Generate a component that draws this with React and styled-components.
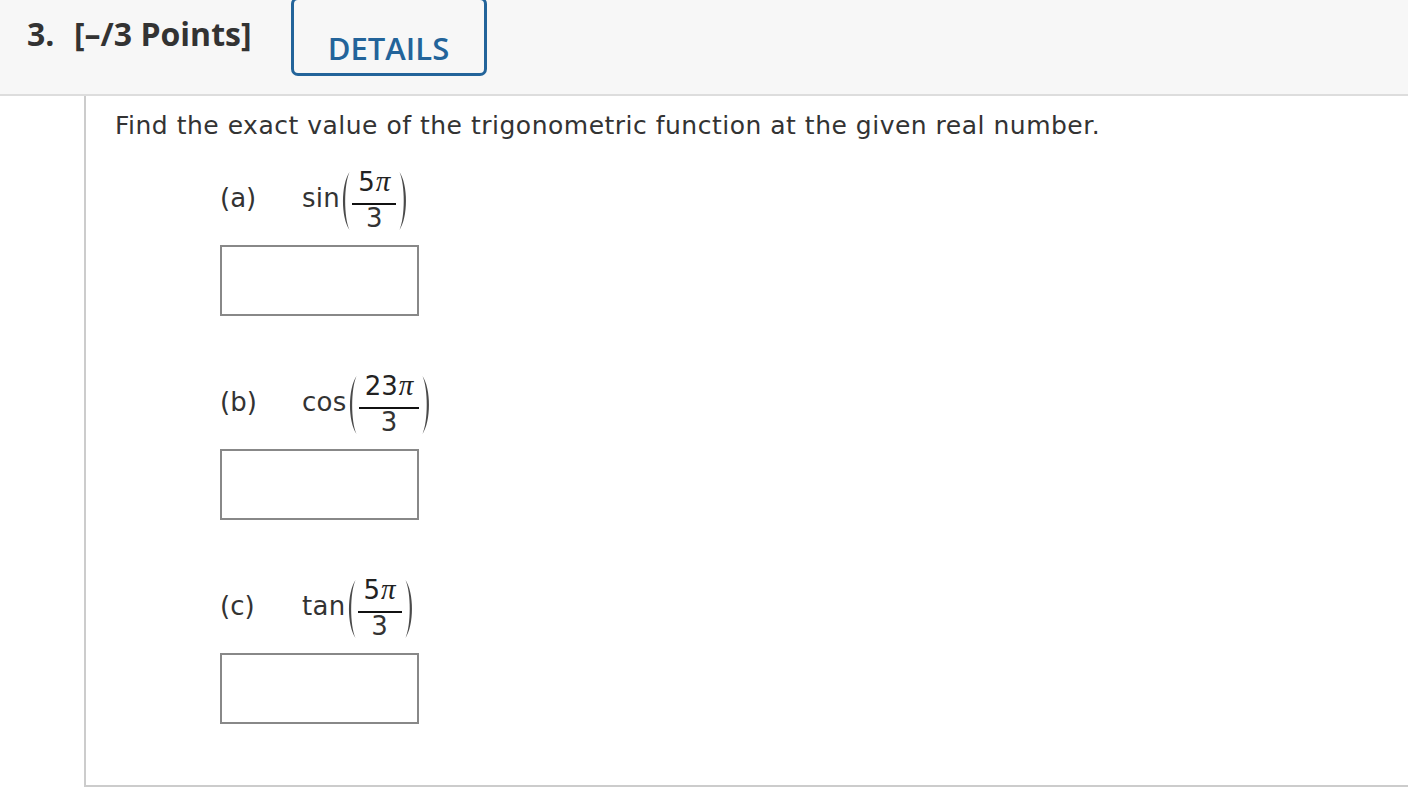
import React from "react";
import styled, { createGlobalStyle } from "styled-components";

const GlobalStyle = createGlobalStyle`
  html, body {
    margin: 0;
    padding: 0;
    background: #fff;
  }
  body {
    font-family: "DejaVu Sans", Verdana, sans-serif;
    color: #333;
  }
`;

const parts = [
  { label: "(a)", fn: "sin", num: "5", den: "3" },
  { label: "(b)", fn: "cos", num: "23", den: "3" },
  { label: "(c)", fn: "tan", num: "5", den: "3" },
];

const Paren = ({ flip }) => (
  <ParenSvg viewBox="0 0 13 60" width="13" height="60" $flip={flip}>
    <path d="M11.5 1 C2.8 14 2.8 46 11.5 59 C5.8 46 5.8 14 11.5 1 Z" fill="#4a4a4a" />
  </ParenSvg>
);

const App = () => {
  return (
    <Page>
      <GlobalStyle />
      <Header>
        <Title>
          <Num>3.</Num>
          <span>[–/3 Points]</span>
        </Title>
        <DetailsButton type="button">DETAILS</DetailsButton>
      </Header>
      <Panel>
        <Prompt>Find the exact value of the trigonometric function at the given real number.</Prompt>
        {parts.map((p) => (
          <Part key={p.label}>
            <Expr>
              <Label>{p.label}</Label>
              <FnName>{p.fn}</FnName>
              <Paren />
              <Fraction>
                <Numer>
                  {p.num}
                  <Pi>π</Pi>
                </Numer>
                <Denom>{p.den}</Denom>
              </Fraction>
              <Paren flip />
            </Expr>
            <Answer type="text" aria-label={`answer ${p.label}`} />
          </Part>
        ))}
      </Panel>
    </Page>
  );
};

const Page = styled.div`
  width: 1408px;
  min-height: 808px;
  background: #fff;
`;

const Header = styled.header`
  height: 94px;
  background: #f7f7f7;
  border-bottom: 2px solid #dddddd;
  display: flex;
  align-items: flex-start;
`;

const Title = styled.h2`
  margin: 14px 0 0 27px;
  font-family: "Open Sans", sans-serif;
  font-weight: 700;
  font-size: 32px;
  line-height: 40px;
  color: #333;
  display: flex;
`;

const Num = styled.span`
  width: 47px;
`;

const DetailsButton = styled.button`
  margin: -3px 0 0 39px;
  width: 196px;
  height: 79px;
  border: 3px solid #23649a;
  border-radius: 7px;
  background: transparent;
  font-family: "Open Sans", sans-serif;
  font-weight: 600;
  font-size: 31px;
  color: #23649a;
  padding: 22px 0 0;
  line-height: 40px;
`;

const Panel = styled.main`
  margin-left: 84px;
  height: 691px;
  box-sizing: border-box;
  border-left: 2px solid #cccccc;
  border-bottom: 2px solid #cccccc;
  padding: 14px 0 0 29px;
`;

const Prompt = styled.p`
  margin: 0 0 29px;
  font-size: 25px;
  letter-spacing: 0.5px;
  line-height: 32px;
  color: #333;
`;

const Part = styled.section`
  padding-left: 105px;
  margin-bottom: 59px;
`;

const Expr = styled.div`
  display: flex;
  align-items: center;
  height: 60px;
  font-size: 26px;
`;

const Label = styled.span`
  width: 82px;
  margin-top: -6px;
`;

const FnName = styled.span`
  margin: -6px -2px 0 0;
  letter-spacing: 0.3px;
`;

const ParenSvg = styled.svg`
  display: block;
  flex-shrink: 0;
  transform: ${(p) => (p.$flip ? "scaleX(-1)" : "none")};
`;

const Fraction = styled.span`
  display: inline-flex;
  flex-direction: column;
  align-items: stretch;
  text-align: center;
  height: 60px;
  margin: 0 2px 0 1px;
  color: #222;
`;

const Numer = styled.span`
  display: block;
  box-sizing: border-box;
  height: 34px;
  padding: 0 6px;
  border-bottom: 2px solid #111;
  line-height: 20px;
  white-space: nowrap;
`;

const Pi = styled.span`
  font-family: "Liberation Serif", "DejaVu Serif", serif;
  font-style: italic;
  font-size: 29px;
  line-height: 20px;
  margin-left: 1px;
`;

const Denom = styled.span`
  display: block;
  line-height: 26px;
  color: #333;
`;

const Answer = styled.input`
  display: block;
  margin-top: 14px;
  width: 199px;
  height: 71px;
  box-sizing: border-box;
  border: 2px solid #888;
  background: #fff;
  outline: none;
`;

export default App;
